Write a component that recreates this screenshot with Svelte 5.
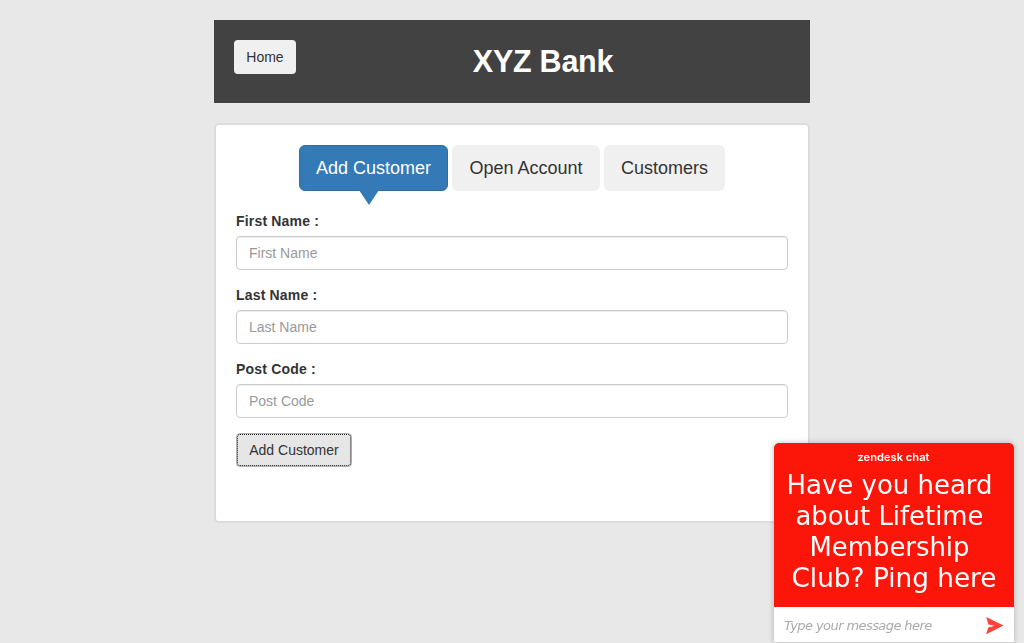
<script>
  const tabs = [
    { label: 'Add Customer', active: true, width: 149 },
    { label: 'Open Account', width: 148 },
    { label: 'Customers', width: 121 }
  ];
  const fields = ['First Name', 'Last Name', 'Post Code'];
  const promo = [
    { text: 'Have you heard', width: 206, x: 12.5 },
    { text: 'about Lifetime', width: 188, x: 21.5 },
    { text: 'Membership', width: 160, x: 35.5 },
    { text: 'Club? Ping here', width: 205, x: 17.5 }
  ];
</script>

<div class="page">
  <header>
    <button class="btn home">Home</button>
    <strong class="title">XYZ Bank</strong>
  </header>
  <main>
    <nav>
      {#each tabs as tab}
        <button class="tab" class:active={tab.active} style="width:{tab.width}px">{tab.label}</button>
      {/each}
    </nav>
    <form>
      {#each fields as field}
        <div class="group">
          <label for={field}>{field} :</label>
          <input id={field} placeholder={field} />
        </div>
      {/each}
      <button type="button" class="btn submit">Add Customer</button>
    </form>
  </main>
</div>

<aside class="chat">
  <div class="banner">
    <svg width="240" height="164" viewBox="0 0 240 164">
      <text class="brand" x="83.500" y="18" textLength="72" lengthAdjust="spacingAndGlyphs">zendesk chat</text>
      {#each promo as line, i}
        <text class="promo" x={line.x} y={51 + i * 31} textLength={line.width} lengthAdjust="spacingAndGlyphs">{line.text}</text>
      {/each}
    </svg>
  </div>
  <div class="reply">
    <span>Type your message here</span>
    <svg class="send" width="18" height="18" viewBox="0 0 18 18">
      <path d="M.2 0 17.500 8.600.2 17.200 2.200 10.400 8.500 8.700 2.400 7.400Z" fill="#ff433a" />
    </svg>
  </div>
</aside>

<style>
  :global(body) {
    margin: 0;
    background: #e8e8e8;
    overflow: hidden;
  }
  * { box-sizing: border-box; }
  .page {
    width: 596px;
    height: 643px;
    margin: 0 auto;
    padding-top: 20px;
    font: 14px/20px "Liberation Sans", Arial, sans-serif;
    color: #333;
  }
  button, input { font: inherit; color: inherit; margin: 0; }
  header {
    display: flex;
    height: 83px;
    padding: 20px;
    background: #424242;
  }
  .btn {
    height: 34px;
    padding: 0;
    border: 0;
    border-radius: 4px;
    background: #f0f0f0;
  }
  .home { width: 62px; }
  .title {
    flex: 1;
    text-align: center;
    font-size: 30.5px;
    line-height: 43px;
    letter-spacing: -.25px;
    color: #fff;
  }
  main {
    height: 400px;
    margin-top: 20px;
    padding: 20px;
    border: 2px solid #dcdcdc;
    border-radius: 5px;
    background: #fff;
  }
  nav {
    display: flex;
    justify-content: center;
    gap: 4px;
  }
  .tab {
    position: relative;
    height: 46px;
    padding: 0;
    border: 0;
    border-radius: 6px;
    background: #f0f0f0;
    font-size: 18px;
    line-height: 24px;
  }
  .tab.active {
    background: #337ab7;
    border: 1px solid #2e6da4;
    color: #fff;
  }
  .tab.active::after {
    content: "";
    position: absolute;
    top: 44px;
    left: 59px;
    border: solid transparent;
    border-width: 15px 10px 0;
    border-top-color: #337ab7;
  }
  form { padding-top: 20px; }
  .group { margin-bottom: 15px; }
  label {
    display: block;
    margin-bottom: 5px;
    font-weight: bold;
    letter-spacing: .18px;
  }
  input {
    display: block;
    width: 100%;
    height: 34px;
    padding: 6px 12px;
    border: 1px solid #ccc;
    border-radius: 4px;
    background: #fff;
    box-shadow: inset 0 1px 1px rgba(0, 0, 0, .075);
  }
  input::placeholder { color: #999; opacity: 1; }
  .submit {
    display: block;
    width: 116px;
    background: #e6e6e6;
    border: 1px solid #adadad;
    outline: 1px dotted #222;
    outline-offset: -2px;
  }
  .chat {
    position: fixed;
    left: 774px;
    top: 443px;
    width: 240px;
    height: 199px;
    border-radius: 5px 5px 0 0;
    background: #fff;
    overflow: hidden;
    box-shadow: 0 0 5px 1px rgba(0, 0, 0, .18);
  }
  .banner { height: 164px; background: #fc1509; }
  svg { display: block; }
  text { fill: #fff; }
  .brand { font: 600 11px Inter, sans-serif; }
  .promo { font: 26px "DejaVu Sans", Verdana, sans-serif; }
  .reply {
    display: flex;
    align-items: center;
    justify-content: space-between;
    height: 35px;
    padding: 2px 10px 0;
    font: italic 13px "DejaVu Sans", Verdana, sans-serif;
    letter-spacing: -.58px;
    color: #aaa;
  }
</style>
